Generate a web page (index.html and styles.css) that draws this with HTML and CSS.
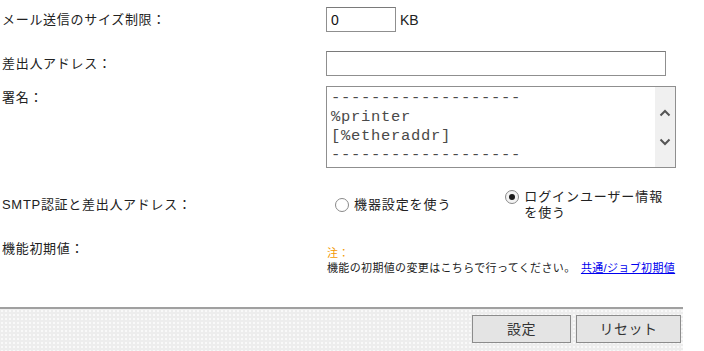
FILE: index.html
```
<!DOCTYPE html>
<html lang="ja">
<head>
	<meta charset="UTF-8">
	<title>メール設定</title>
	<link rel="stylesheet" href="styles.css">
</head>
<body>
	<div id="form">
		<div class="row row-size">
			<div class="label">メール送信のサイズ制限：</div>
			<div class="field">
				<input type="text" class="txt txt-size" value="0">
				<span class="unit">KB</span>
			</div>
		</div>
		<div class="row row-from">
			<div class="label">差出人アドレス：</div>
			<div class="field">
				<input type="text" class="txt txt-from" value="">
			</div>
		</div>
		<div class="row row-sign">
			<div class="label label-top">署名：</div>
			<div class="field">
				<div class="sign">
					<pre class="sign-text">-------------------
%printer
[%etheraddr]
-------------------</pre>
					<div class="scroll">
						<svg width="14" height="10" viewBox="0 0 14 10"><path d="M2.5 7.5 L7 3 L11.5 7.5" fill="none" stroke="#555" stroke-width="2"/></svg>
						<svg width="14" height="10" viewBox="0 0 14 10"><path d="M2.5 2.5 L7 7 L11.5 2.5" fill="none" stroke="#555" stroke-width="2"/></svg>
					</div>
				</div>
			</div>
		</div>
		<div class="row row-smtp">
			<div class="label">SMTP認証と差出人アドレス：</div>
			<div class="field radios">
				<label class="radio"><span class="dot"></span><span class="rtext">機器設定を使う</span></label>
				<label class="radio radio-login"><span class="dot on"></span><span class="rtext">ログインユーザー情報<br>を使う</span></label>
			</div>
		</div>
		<div class="row row-init">
			<div class="label label-top">機能初期値：</div>
			<div class="field note">
				<div class="note-head">注：</div>
				<div>機能の初期値の変更はこちらで行ってください。 <a href="javascript:;">共通/ジョブ初期値</a></div>
			</div>
		</div>
	</div>
	<div id="footer">
		<a href="javascript:;" class="btn btn-set">設定</a>
		<a href="javascript:;" class="btn btn-reset">リセット</a>
	</div>
</body>
</html>
```

FILE: styles.css
```
* {
	padding: 0;
	margin: 0;
	box-sizing: border-box;
}

body {
	width: 704px;
	height: 351px;
	overflow: hidden;
	font-family: "Liberation Sans", "Noto Sans CJK JP", sans-serif;
	font-size: 13px;
	color: #222;
	background: #fff;
}

#form {
	height: 307px;
	padding-left: 2px;
}

.row {
	display: flex;
	align-items: center;
}

.label {
	width: 324px;
	line-height: 18px;
	letter-spacing: 0.7px;
}

.label-top {
	align-self: flex-start;
}

.field {
	display: flex;
	align-items: center;
}

.row-size {
	padding-top: 7px;
}

.row-from {
	margin-top: 19px;
}

.row-sign {
	margin-top: 10px;
}

.row-sign .label {
	padding-top: 3px;
}

.row-smtp {
	margin-top: 20px;
	height: 34px;
}

.row-init {
	margin-top: 16px;
}

.row-init .label {
	padding-top: 2px;
}

.txt {
	height: 25px;
	border: 1px solid #8f8f8f;
	border-top-color: #7a7a7a;
	padding: 0 4px;
	font-family: "Liberation Sans", sans-serif;
	font-size: 14px;
	color: #111;
	outline: none;
}

.txt-size {
	width: 70px;
}

.txt-from {
	width: 340px;
}

.unit {
	margin-left: 4px;
	font-size: 14px;
}

.sign {
	display: flex;
	width: 350px;
	height: 82px;
	border: 1px solid #8f8f8f;
	background: #fff;
}

.sign-text {
	flex: 1;
	padding: 2px 0 0 4px;
	font-family: "Liberation Mono", monospace;
	font-size: 15.5px;
	letter-spacing: 0.7px;
	line-height: 19px;
	color: #4a4a4a;
	overflow: hidden;
}

.scroll {
	width: 20px;
	background: #f0f0f0;
	display: flex;
	flex-direction: column;
	align-items: center;
	padding-top: 21px;
	gap: 19px;
}

.scroll svg {
	display: block;
}

.radio {
	display: flex;
	align-items: center;
	letter-spacing: 0.9px;
}

.radio-login {
	margin-left: 54px;
}

.dot {
	position: relative;
	width: 14px;
	height: 14px;
	margin: 0 5px 0 9px;
	border: 1px solid #8a8a8a;
	border-radius: 50%;
	background: #fff;
	flex-shrink: 0;
}

.dot.on {
	margin-left: 0;
	background: #f3f3f3;
}

.dot.on::after {
	content: "";
	position: absolute;
	left: 3px;
	top: 3px;
	width: 6px;
	height: 6px;
	border-radius: 50%;
	background: #1a1a1a;
}

.rtext {
	line-height: 16px;
}

.radio-login .dot {
	margin-top: -16px;
}

.note {
	display: block;
	padding-top: 8px;
	padding-left: 1px;
	font-size: 11px;
	line-height: 15px;
	letter-spacing: 0.35px;
}

.note-head {
	color: #f39800;
}

.note a {
	color: #0000ee;
	margin-left: 2px;
}

#footer {
	display: flex;
	justify-content: flex-end;
	gap: 5px;
	width: 683px;
	height: 44px;
	padding: 6px 2px 0 0;
	border-top: 2px solid #a0a0a0;
	background-color: #ededed;
	background-image: radial-gradient(#f9f9f9 0.8px, transparent 1px);
	background-size: 4px 4px;
}

.btn {
	display: block;
	height: 28px;
	line-height: 26px;
	border: 1px solid #8c8c8c;
	background: #e4e4e4;
	color: #333;
	text-align: center;
	text-decoration: none;
	font-size: 14px;
	letter-spacing: 0.5px;
}

.btn-set {
	width: 99px;
}

.btn-reset {
	width: 105px;
}
```
